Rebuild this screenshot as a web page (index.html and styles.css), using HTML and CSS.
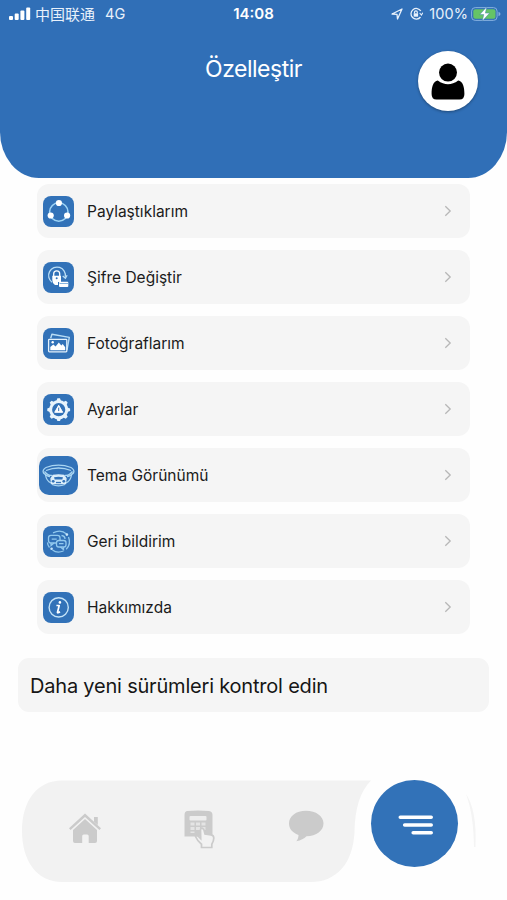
FILE: index.html
```html
<!DOCTYPE html>
<html lang="tr">
<head>
<meta charset="utf-8">
<meta name="viewport" content="width=device-width">
<title>Özelleştir</title>
<link rel="stylesheet" href="styles.css">
</head>
<body>
<div class="screen">
  <header class="header">
    <div class="status">
      <div class="status-left">
        <svg class="signal" width="22" height="14" viewBox="0 0 22 14" fill="#fff"><rect x="0" y="9" width="4" height="4" rx="1"/><rect x="5.7" y="6.5" width="4" height="6.5" rx="1"/><rect x="11.4" y="3.5" width="4" height="9.5" rx="1"/><rect x="17.2" y="0.5" width="4" height="12.5" rx="1"/></svg>
        <span class="carrier">中国联通</span>
        <span class="network">4G</span>
      </div>
      <span class="clock">14:08</span>
      <div class="status-right">
        <svg width="12" height="12" viewBox="0 0 12 12" fill="none" stroke="#e8f1fb" stroke-width="1.3" stroke-linejoin="round"><path d="M1 6 11 1 6.5 11 6 6.3Z"/></svg>
        <svg class="lock" width="14" height="14" viewBox="0 0 14 14" fill="none" stroke="#e8f1fb" stroke-width="1.3"><path d="M11.8 4A5.3 5.3 0 1 0 11.500 10"/><path d="m10.700 6 1.700 2 1.400-2.300" stroke-width="1.100"/><path d="M5.500 6.5V5.3a1.4 1.4 0 0 1 2.8 0v1.2" stroke-width="1.200"/><rect x="4.7" y="6.3" width="4.400" height="3.400" fill="#e8f1fb" stroke="none"/></svg>
        <span class="percent">100%</span>
        <svg class="battery" width="30" height="16" viewBox="0 0 30 16"><rect x=".6" y="1.6" width="25.5" height="12.8" rx="3.6" fill="none" stroke="#86b0df"/><rect x="2.3" y="3.2" width="22.2" height="9.6" rx="2" fill="#65c466"/><path d="M27.5 5.7q2 .9 2 2.3t-2 2.3Z" fill="#86b0df"/><path d="M15.8.8 8.800 8.600h4L11.200 15.200 18.600 7.100h-4.200Z" fill="#fff" stroke="#3f82b0" stroke-width=".5"/></svg>
      </div>
    </div>
    <div class="title-row">
      <h1 class="title">Özelleştir</h1>
      <div class="avatar">
        <svg width="34" height="37" viewBox="0 0 34 37"><path d="M6.8 17.5Q17 25 27.2 17.5C32 18.5 33.4 24 33.4 31Q33.4 36.5 28.5 36.5H5.5Q.6 36.5.6 31C.6 24 2 18.5 6.8 17.5Z"/><circle cx="17" cy="9.6" r="9"/></svg>
      </div>
    </div>
  </header>

  <main class="content">
    <nav class="list">
      <a class="item">
        <span class="tile"><svg viewBox="0 0 31 31"><circle cx="15.8" cy="16" r="9.2" fill="none" stroke="#9dd4f6" stroke-width="1.6"/><g fill="#fff"><circle cx="15.9" cy="7" r="3.1"/><circle cx="7.7" cy="19.5" r="3.1"/><circle cx="24.1" cy="19.5" r="3.1"/></g></svg></span>
        <span class="label">Paylaştıklarım</span>
        <svg class="chevron" viewBox="0 0 8 12"><path d="m1.3 1.2 4.9 4.8-4.9 4.8"/></svg>
      </a>
      <a class="item">
        <span class="tile"><svg viewBox="0 0 31 31" fill="none" stroke="#b9ddf5" stroke-width="1.3"><path d="M9 20.2A8.4 8.4 0 1 1 22.3 14.8"/><path d="m19.7 14 2.7 2.2 1.7-3"/><path d="M10.7 14V11.8a3 3 0 0 1 6 0V14" stroke="#fff"/><path d="M9.3 13.7H18V20H15v3H12Q9.3 21.5 9.3 18Z" fill="#fff" stroke="none"/><circle cx="13.7" cy="16.3" r="1" fill="#3272b8" stroke="none"/><rect x="16" y="19.8" width="9.3" height="5.2" rx="1" fill="#fff" stroke="none"/><path d="M16.5 21.5h8.5" stroke="#7aaddd" stroke-width=".9"/></svg></span>
        <span class="label">Şifre Değiştir</span>
        <svg class="chevron" viewBox="0 0 8 12"><path d="m1.3 1.2 4.9 4.8-4.9 4.8"/></svg>
      </a>
      <a class="item">
        <span class="tile"><svg viewBox="0 0 31 31"><path d="m7.7 10.2 1.2-4L26.3 9.4 24 21.8" fill="none" stroke="#b9ddf5" stroke-width="1.4" stroke-linejoin="round"/><rect x="5.6" y="11.3" width="18.2" height="12.5" rx=".8" fill="none" stroke="#e4f1fb" stroke-width="1.3"/><path d="M7.3 22.2v-3.3l3-2.5 2.3 2 3.2-4 2.5 3 1.4-1.4 2.5 3.3v2.9Z" fill="#fff"/><circle cx="9.7" cy="14.3" r="1.2" fill="#fff"/></svg></span>
        <span class="label">Fotoğraflarım</span>
        <svg class="chevron" viewBox="0 0 8 12"><path d="m1.3 1.2 4.9 4.8-4.9 4.8"/></svg>
      </a>
      <a class="item">
        <span class="tile"><svg viewBox="0 0 31 31"><g fill="#e8f4fc"><circle cx="15.7" cy="15.7" r="9.6"/><path id="t" d="M13.4 7 14.4 4.3H17L18 7Z"/><use href="#t" transform="rotate(45 15.7 15.7)"/><use href="#t" transform="rotate(90 15.7 15.7)"/><use href="#t" transform="rotate(135 15.7 15.7)"/><use href="#t" transform="rotate(180 15.7 15.7)"/><use href="#t" transform="rotate(225 15.7 15.7)"/><use href="#t" transform="rotate(270 15.7 15.7)"/><use href="#t" transform="rotate(315 15.7 15.7)"/></g><circle cx="15.7" cy="15.7" r="6.6" fill="#3272b8"/><path d="m15.7 11.3 4 7h-8Z" fill="#fff" stroke="#fff" stroke-linejoin="round"/><path d="M15.7 13.6v3.5" stroke="#3272b8" stroke-width="1"/></svg></span>
        <span class="label">Ayarlar</span>
        <svg class="chevron" viewBox="0 0 8 12"><path d="m1.3 1.2 4.9 4.8-4.9 4.8"/></svg>
      </a>
      <a class="item">
        <span class="tile tile-large"><svg viewBox="0 0 39 39" fill="none" stroke="#a9d5f2" stroke-width="1.3"><path d="M7 11.500Q19.500 6.800 32 11.500 36 14 34.500 17 31 20.500 28 20.500M7 11.500Q3 14 4.500 17 8 20.500 11 20.500"/><path d="M7 14.500Q19.500 9.500 32 14.500M5.500 15.500Q9 20 13 19.300M33.500 15.500Q30 20 26 19.300"/><path d="M6.500 19Q7.500 25 12 27M32.500 19Q31.500 25 27 27M13 28.500Q19.500 31.300 26 28.500"/><path d="M12 22.500 14 19.500Q19.500 18.300 25 19.500L27 22.500 26.500 27.500H12.500Z" fill="#dceefa" stroke="#dceefa"/><path d="M15 21.300Q19.500 20 24 21.300L23.300 23.500H15.700Z" fill="#3272b8" stroke="none"/><circle cx="14.200" cy="25.300" r="1.400" fill="#3272b8" stroke="none"/><circle cx="24.800" cy="25.300" r="1.400" fill="#3272b8" stroke="none"/><path d="M17 26.500h5" stroke="#3272b8"/></svg></span>
        <span class="label">Tema Görünümü</span>
        <svg class="chevron" viewBox="0 0 8 12"><path d="m1.3 1.2 4.9 4.8-4.9 4.8"/></svg>
      </a>
      <a class="item">
        <span class="tile"><svg viewBox="0 0 31 31" fill="none" stroke="#92c9ee" stroke-width="1.3"><path d="M10 6.800Q18 2.800 23.500 8M25.500 11Q28.400 18 23.200 23.300M20.500 25Q14 27.500 9.500 24M6.500 21.500Q4.500 19 4.500 16.500"/><rect x="5.500" y="9.300" width="11.500" height="7.700" rx="2.500"/><path d="M8 17v2.500l3-2.500M8.700 13.200h5"/><rect x="13.500" y="14.500" width="9.500" height="6.500" rx="2.200" fill="#3272b8"/><path d="M20.5 21v2.500l-3-2.500M16 17.700h4.500M18.500 9.500Q22 10 22 13"/><g fill="#c8e6f9" stroke="none"><circle cx="23.9" cy="8.6" r="1.3"/><circle cx="8.600" cy="22.800" r="1.3"/></g></svg></span>
        <span class="label">Geri bildirim</span>
        <svg class="chevron" viewBox="0 0 8 12"><path d="m1.3 1.2 4.9 4.8-4.9 4.8"/></svg>
      </a>
      <a class="item">
        <span class="tile"><svg viewBox="0 0 31 31" fill="none" stroke="#c4e3f7" stroke-width="1.4"><circle cx="15.7" cy="15.4" r="9.6"/><path d="M13.4 13.5h2.8l-1.7 6.8q-.2 1.2 2.5-.5" stroke="#fff" stroke-width="1.7" stroke-linejoin="round"/><circle cx="16.9" cy="10.4" r="1.3" fill="#fff" stroke="none"/></svg></span>
        <span class="label">Hakkımızda</span>
        <svg class="chevron" viewBox="0 0 8 12"><path d="m1.3 1.2 4.9 4.8-4.9 4.8"/></svg>
      </a>
    </nav>
    <button class="update"><span class="update-label">Daha yeni sürümleri kontrol edin</span></button>
  </main>

  <footer class="tabbar">
    <svg class="tabbar-shape" width="507" height="120" viewBox="0 0 507 120"><path d="M62 10.5H371C360 22 355 38 354.500 62C353 94 336 112 311 112H62C37 112 22 91 22 61C22 31 37 10.500 62 10.500Z" fill="#f2f2f2"/><path d="M466 24Q477 40 475.500 77H474Q473.500 44 466 24Z" fill="#f4f4f4"/></svg>
    <div class="tabs">
      <a class="tab tab-home"><svg width="34" height="31" viewBox="0 0 34 31" fill="#cbcbcb"><path d="M17 .5 33 15.200 31.400 17 17 4 2.600 17 1 15.200Z"/><path d="M26 4h3.800v8L26 8.700Z"/><path d="M17 6 29 17V28q0 2-2 2H20.700V23q0-1.500-1.500-1.500h-3.500q-1.500 0-1.500 1.500v7H7q-2 0-2-2V17Z"/></svg></a>
      <a class="tab tab-calc"><svg width="33" height="40" viewBox="0 0 33 40"><path d="M4 1Q15 0 26 1 29.500 1.500 29.500 5V26.500H1.500V5Q1.500 1.500 4 1Z" fill="#cbcbcb"/><rect x="6.500" y="6" width="17" height="4.500" rx="1" fill="#eee"/><path d="M7.500 12.500h4v3h-4zM13 12.500h4v3h-4zM18.500 12.500h4v3h-4zM7.500 17h4v3h-4zM13 17h4v3h-4zM18.500 17h4v3h-4zM7.500 21.500h4v1.500h-4z" fill="#e4e4e4"/><path d="M17.500 19.500q1.500-3 3.500.5l1 4 6 .8q2.800.5 2.800 3.200 0 3-2 6.300v3.200H18.500v-3.300q-4-3-6-7.700 1.300-1.700 3 0l2.200 2.200Z" fill="#f2f2f2" stroke="#cbcbcb" stroke-width="1.700"/></svg></a>
      <a class="tab tab-chat"><svg width="36" height="32" viewBox="0 0 36 32"><path d="M18 .8C8 .8 1 6.300 1 13.500 1 18.500 4 22.400 10.500 25 10.500 27.500 9.700 29.500 8.300 31.300 13 30.500 16 28.500 18.500 26.200 28.500 26.200 35.500 20.500 35.500 13.500 35.500 6.300 28 .8 18 .8Z" fill="#cbcbcb"/></svg></a>
      <a class="tab tab-menu"><svg width="36" height="20" viewBox="0 0 36 20" stroke="#fff" stroke-width="3.600" stroke-linecap="round"><path d="M2.300 2.300H33.200M6.700 10H33.200M15.200 17.700H33.200"/></svg></a>
    </div>
  </footer>
</div>
</body>
</html>
```

FILE: styles.css
```css
* { box-sizing: border-box; }

body {
  margin: 0;
  background: #fefefe;
  font-family: Inter, "Noto Sans CJK SC", sans-serif;
  color: #1b1b1b;
}

svg { display: block; flex: none; }

.screen {
  width: 507px;
  height: 900px;
  display: flex;
  flex-direction: column;
  overflow: hidden;
}

.header {
  height: 178px;
  flex: none;
  background: #306fb7;
  border-radius: 0 0 39px 39px / 0 0 46px 46px;
  color: #fff;
}

.status {
  height: 28px;
  display: grid;
  grid-template-columns: 1fr auto 1fr;
  align-items: center;
  padding: 0 6px 0 9px;
  font-size: 14.5px;
  line-height: 20px;
  color: #e8f1fb;
}

.status-left, .status-right { display: flex; align-items: center; }
.status-right { justify-content: flex-end; }
.signal { margin-right: 4px; }
.carrier { font-family: "Noto Sans CJK SC", sans-serif; font-size: 15px; }
.network { margin-left: 10px; }
.clock { margin-right: 3px; font-weight: 600; font-size: 15px; color: #fff; }
.lock { margin: 0 6px 0 6px; }
.percent { margin-right: 3px; letter-spacing: .1px; }

.title-row {
  display: grid;
  grid-template-columns: 1fr auto 1fr;
  padding-right: 29px;
  padding-left: 29px;
}

.title {
  grid-column: 2;
  margin: 26px 0 0;
  font-size: 23px;
  line-height: 30px;
  letter-spacing: -.5px;
  font-weight: 400;
}

.avatar {
  justify-self: end;
  width: 60px;
  height: 60px;
  margin-top: 23px;
  display: grid;
  place-items: center;
  border-radius: 50%;
  background: #fff;
  box-shadow: 0 1px 3px rgba(0, 0, 0, .35);
  color: #000;
}

.content { padding: 6px 18px 0; flex: none; }

.list {
  display: flex;
  flex-direction: column;
  gap: 12px;
  padding: 0 19px;
}

.item {
  height: 54px;
  display: grid;
  grid-template-columns: 44px 1fr auto;
  align-items: center;
  padding: 0 18px 0 6px;
  border-radius: 12px;
  background: #f5f5f5;
}

.tile {
  width: 31px;
  height: 31px;
  border-radius: 8px;
  background: #3272b8;
}

.tile svg { width: 100%; height: 100%; }
.tile-large { width: 39px; height: 39px; margin-left: -4px; border-radius: 10px; }
.label { padding-top: 2px; font-size: 15.5px; line-height: 22px; }

.chevron {
  width: 8px;
  height: 12px;
  fill: none;
  stroke: #b7b7b7;
  stroke-width: 1.3;
}

.update {
  display: flex;
  align-items: center;
  width: 471px;
  height: 54px;
  margin-top: 24px;
  padding: 2px 12px 0;
  border: 0;
  border-radius: 11px;
  background: #f5f5f5;
  font: 20px/28px Inter, sans-serif;
  letter-spacing: -.2px;
  color: #161616;
}

.tabbar { position: relative; height: 120px; margin-top: auto; margin-bottom: 10px; }
.tabbar-shape { position: absolute; inset: 0; }
.tabs { position: relative; display: flex; height: 120px; padding: 10px 49px 0 68px; justify-content: space-between; }
.tab { display: block; }
.tab-home { padding-top: 33px; }
.tab-calc { padding-top: 30px; margin-left: 34px; }
.tab-chat { padding-top: 30px; margin-left: 25px; }

.tab-menu {
  display: grid;
  place-items: center;
  width: 87px;
  height: 87px;
  padding: 2px 0 0 3px;
  border-radius: 50%;
  background: #3272b8;
}
```
